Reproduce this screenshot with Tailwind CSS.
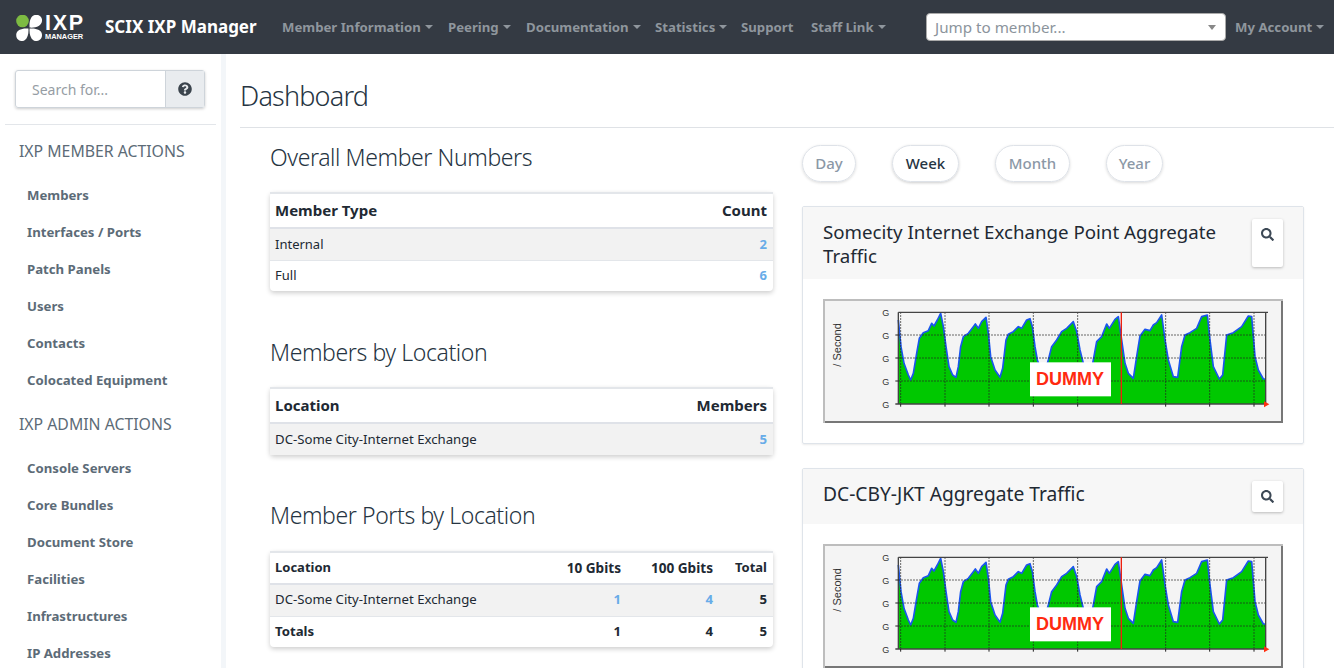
<!DOCTYPE html>
<html lang="en">
<head>
    <meta charset="UTF-8">
    <meta name="viewport" content="width=device-width, initial-scale=1.0">
    <title>SCIX IXP Manager</title>
    <script src="https://cdn.jsdelivr.net/npm/@tailwindcss/browser@4"></script>
</head>
<body class="bg-white font-['Noto_Sans',sans-serif] text-[#212933] overflow-hidden">

    <!-- shared graph -->
    <svg class="hidden">
      <symbol id="graph" viewBox="69 297 1380 372">
        <rect x="69" y="297" width="1380" height="372" fill="#bdbdbd"/>
        <rect x="75" y="303" width="1374" height="366" fill="#777"/>
        <rect x="75" y="303" width="1368" height="360" fill="#f4f4f4"/>
        <polygon fill="#00c800" points="295,612 295,360 303,440 312,490 325,525 332,540 340,520 350,460 358,415 370,398 385,392 395,370 402,378 412,360 422,340 430,380 438,440 447,500 458,525 468,532 475,500 482,440 490,410 505,400 520,380 526,372 535,385 545,365 558,352 565,400 572,470 585,510 600,532 608,505 618,420 625,403 640,395 655,380 665,385 680,360 690,356 697,380 705,440 712,480 730,530 745,480 755,440 770,420 785,395 800,385 820,365 830,395 840,450 850,490 870,530 880,480 890,425 905,410 920,372 928,385 945,358 955,350 965,420 975,490 985,520 1000,535 1010,470 1020,408 1035,388 1050,392 1060,375 1070,368 1085,345 1095,420 1105,480 1120,530 1133,532 1145,440 1155,405 1170,398 1190,385 1205,350 1222,345 1230,420 1240,500 1258,537 1268,525 1280,405 1300,398 1325,380 1345,348 1355,350 1365,470 1375,510 1390,537 1397,537 1397,612"/>
        <polyline fill="none" stroke="#1a55ee" stroke-width="5" stroke-linejoin="round" points="295,360 303,440 312,490 325,525 332,540 340,520 350,460 358,415 370,398 385,392 395,370 402,378 412,360 422,340 430,380 438,440 447,500 458,525 468,532 475,500 482,440 490,410 505,400 520,380 526,372 535,385 545,365 558,352 565,400 572,470 585,510 600,532 608,505 618,420 625,403 640,395 655,380 665,385 680,360 690,356 697,380 705,440 712,480 730,530 745,480 755,440 770,420 785,395 800,385 820,365 830,395 840,450 850,490 870,530 880,480 890,425 905,410 920,372 928,385 945,358 955,350 965,420 975,490 985,520 1000,535 1010,470 1020,408 1035,388 1050,392 1060,375 1070,368 1085,345 1095,420 1105,480 1120,530 1133,532 1145,440 1155,405 1170,398 1190,385 1205,350 1222,345 1230,420 1240,500 1258,537 1268,525 1280,405 1300,398 1325,380 1345,348 1355,350 1365,470 1375,510 1390,537 1397,537"/>
        <path d="M295 405H1400M295 474H1400M295 543H1400M302 337V612M435 337V612M567 337V612M700 337V612M833 337V612M1097 337V612M1229 337V612M1362 337V612" fill="none" stroke="#222" stroke-width="3" stroke-dasharray="4 5"/>
        <path d="M295 337H1404M295 337V612M1397 337V612M286 612H1397" stroke="#444" stroke-width="4" fill="none"/>
        <path d="M302 612v8M435 612v8M567 612v8M700 612v8M833 612v8M1097 612v8M1229 612v8M1362 612v8M286 405h10M286 474h10M286 543h10" stroke="#222" stroke-width="3"/>
        <path d="M964 337V612" stroke="#ee2010" stroke-width="4"/>
        <polygon points="1392,604 1408,613 1392,622" fill="#ff3010"/>
        <g font-family="'Liberation Sans',sans-serif" font-size="27" fill="#333">
          <text x="247" y="349">G</text><text x="247" y="417">G</text><text x="247" y="486">G</text><text x="247" y="555">G</text><text x="247" y="624">G</text>
          <text transform="translate(122 500) rotate(-90)" font-size="33">/ Second</text>
        </g>
        <rect x="690" y="487" width="243" height="102" fill="#fff"/>
        <text x="708" y="556" font-family="'Liberation Sans',sans-serif" font-weight="700" font-size="54" fill="#ff2a10">DUMMY</text>
      </symbol>
      <symbol id="icon-search" viewBox="0 0 512 512"><path fill="currentColor" d="M505 442.7L405.3 343c-4.5-4.5-10.6-7-17-7H372c27.6-35.3 44-79.7 44-128C416 93.1 322.9 0 208 0S0 93.1 0 208s93.1 208 208 208c48.3 0 92.7-16.4 128-44v16.3c0 6.4 2.5 12.5 7 17l99.7 99.7c9.4 9.4 24.6 9.4 33.9 0l28.3-28.3c9.4-9.4 9.4-24.6.1-34zM208 336c-70.7 0-128-57.2-128-128 0-70.7 57.2-128 128-128 70.7 0 128 57.2 128 128 0 70.7-57.2 128-128 128z"/></symbol>
    </svg>

    <!-- top nav -->
    <nav class="h-[54px] bg-[#343a43] flex items-center">
      <div class="w-[105px] pl-4 shrink-0 flex items-center">
        <svg class="block mt-[2px]" width="26" height="26" viewBox="0 2 26 26">
          <circle cx="6.5" cy="8" r="6.3" fill="#7dbb42"/>
          <path d="M13.6 14.6 C13 8 15 2 20 1.8 C24 1.6 26.4 4.6 26 8 C25.6 12.6 20 15.2 13.6 14.6Z" fill="#fff"/>
          <path d="M12.4 15.6 C6 15 0.2 17 0.2 22 C0.2 26 3 28 6.5 28 C10.5 28 13 22 12.4 15.6Z" fill="#fff"/>
          <path d="M13.6 15.6 C20 15 26 17 26 22 C26 26 23 28 19.5 28 C15.5 28 13 22 13.6 15.6Z" fill="#fff"/>
        </svg>
        <div class="ml-[3px] mt-[1px] text-white font-['Liberation_Sans',sans-serif] font-bold">
          <div class="text-[21.5px] leading-[18px] tracking-[1.7px]">IXP</div>
          <div class="mt-[1px] text-[7.4px] leading-[8px]">MANAGER</div>
        </div>
      </div>
      <a class="text-white font-bold text-[17px] w-[177px] shrink-0 whitespace-nowrap">SCIX IXP Manager</a>
      <div class="flex pt-[1px] text-[13.2px] font-bold text-[#8f969d] whitespace-nowrap">
        <a class="w-[166px] flex items-center">Member Information<span class="ml-1 border-x-4 border-t-4 border-x-transparent border-t-[#8f969d]"></span></a>
        <a class="w-[78px] flex items-center">Peering<span class="ml-1 border-x-4 border-t-4 border-x-transparent border-t-[#8f969d]"></span></a>
        <a class="w-[129px] flex items-center">Documentation<span class="ml-1 border-x-4 border-t-4 border-x-transparent border-t-[#8f969d]"></span></a>
        <a class="w-[86px] flex items-center">Statistics<span class="ml-1 border-x-4 border-t-4 border-x-transparent border-t-[#8f969d]"></span></a>
        <a class="w-[70px]">Support</a>
        <a class="w-[115px] flex items-center">Staff Link<span class="ml-1 border-x-4 border-t-4 border-x-transparent border-t-[#8f969d]"></span></a>
      </div>
      <div class="w-[300px] h-[28px] bg-white rounded border border-[#aaa] flex items-center justify-between pl-2 pr-[9px] text-[15.2px] text-[#8c949c] shrink-0">
        <span>Jump to member...</span>
        <span class="border-x-[4px] border-t-[5px] border-x-transparent border-t-[#888]"></span>
      </div>
      <a class="ml-[9px] pt-[1px] text-[13.2px] font-bold text-[#8f969d] flex items-center whitespace-nowrap">My Account<span class="ml-1 border-x-4 border-t-4 border-x-transparent border-t-[#8f969d]"></span></a>
    </nav>

    <div class="flex h-[614px] overflow-hidden">
      <!-- sidebar -->
      <aside class="w-[226px] shrink-0 border-r-[5px] border-[#f3f6f9] pt-4 px-[5px]">
        <div class="mx-[10px] flex h-[38px] w-[190px] rounded-[3px] border border-[#ced4da] shadow-[0_1px_3px_rgba(0,0,0,0.2)] text-[14px]">
          <div class="w-[150px] pl-4 flex items-center text-[#969da4] border-r border-[#ced4da]">Search for...</div>
          <div class="flex-1 bg-[#e9ecef] flex items-center justify-center">
            <svg width="14" height="14" viewBox="0 0 512 512"><path fill="#3b444d" d="M504 256c0 136.997-111.043 248-248 248S8 392.997 8 256C8 119.083 119.043 8 256 8s248 111.083 248 248zM262.655 90c-54.497 0-89.255 22.957-116.549 63.758-3.536 5.286-2.353 12.415 2.715 16.258l34.699 26.31c5.205 3.947 12.621 3.008 16.665-2.122 17.864-22.658 30.113-35.797 57.303-35.797 20.429 0 45.698 13.148 45.698 32.958 0 14.976-12.363 22.667-32.534 33.976C247.128 238.528 216 254.941 216 296v4c0 6.627 5.373 12 12 12h56c6.627 0 12-5.373 12-12v-1.333c0-28.462 83.186-29.647 83.186-106.667 0-58.002-60.165-102-116.531-102zM256 338c-25.365 0-46 20.635-46 46 0 25.364 20.635 46 46 46s46-20.636 46-46c0-25.365-20.635-46-46-46z"/></svg>
          </div>
        </div>
        <div class="mt-4 border-t border-[#e3e6ea] pt-[14px]">
          <h6 class="pl-[14px] h-[24px] leading-[24px] text-[15.8px] text-[#5c6b77] uppercase">IXP Member Actions</h6>
          <ul class="mt-[14px] pl-[22px] text-[13.2px] font-bold text-[#5c6b77] leading-[37px]">
            <li>Members</li><li>Interfaces / Ports</li><li>Patch Panels</li><li>Users</li><li>Contacts</li><li>Colocated Equipment</li>
          </ul>
          <h6 class="mt-[13px] pl-[14px] h-[24px] leading-[24px] text-[15.8px] text-[#5c6b77] uppercase">IXP Admin Actions</h6>
          <ul class="mt-[14px] pl-[22px] text-[13.2px] font-bold text-[#5c6b77] leading-[37px]">
            <li>Console Servers</li><li>Core Bundles</li><li>Document Store</li><li>Facilities</li><li>Infrastructures</li><li>IP Addresses</li>
          </ul>
        </div>
      </aside>

      <!-- main -->
      <main class="flex-1 min-w-0">
        <div class="ml-[14px] h-[74px] border-b border-[#dfe2e6] pt-[21px]">
          <h1 class="text-[27px] leading-[42px] font-light tracking-[-0.8px] text-[#263442]">Dashboard</h1>
        </div>
        <div class="flex pl-[44px]">
          <!-- left tables -->
          <section class="w-[503px] shrink-0">
            <h3 class="mt-[12px] h-[34px] leading-[34px] text-[23px] font-light tracking-[-0.4px] text-[#263442]">Overall Member Numbers</h3>
            <table class="mt-[18px] w-full border-t-2 border-[#e3e6ea] rounded shadow-[0_2px_5px_rgba(0,0,0,0.2)] text-[13px]">
              <thead class="text-[15px] font-bold"><tr class="h-[35px] border-b-2 border-[#dfe2e8]"><th class="pl-[5px] text-left">Member Type</th><th class="pr-[6px] text-right">Count</th></tr></thead>
              <tbody>
                <tr class="h-[32px] bg-[#f2f2f2] border-b border-[#e3e6ea]"><td class="pl-[5px]">Internal</td><td class="pr-[6px] text-right font-bold text-[#68ace8]">2</td></tr>
                <tr class="h-[31px]"><td class="pl-[5px]">Full</td><td class="pr-[6px] text-right font-bold text-[#68ace8]">6</td></tr>
              </tbody>
            </table>
            <h3 class="mt-[44px] h-[34px] leading-[34px] text-[23px] font-light tracking-[-0.4px] text-[#263442]">Members by Location</h3>
            <table class="mt-[18px] w-full border-t-2 border-[#e3e6ea] rounded shadow-[0_2px_5px_rgba(0,0,0,0.2)] text-[13.2px]">
              <thead class="text-[15px] font-bold"><tr class="h-[35px] border-b-2 border-[#dfe2e8]"><th class="pl-[5px] text-left">Location</th><th class="pr-[6px] text-right">Members</th></tr></thead>
              <tbody>
                <tr class="h-[32px] bg-[#f2f2f2]"><td class="pl-[5px]">DC-Some City-Internet Exchange</td><td class="pr-[6px] text-right font-bold text-[#68ace8]">5</td></tr>
              </tbody>
            </table>
            <h3 class="mt-[43px] h-[34px] leading-[34px] text-[23px] font-light tracking-[-0.4px] text-[#263442]">Member Ports by Location</h3>
            <table class="mt-[19px] w-full border-t-2 border-[#e3e6ea] rounded shadow-[0_2px_5px_rgba(0,0,0,0.2)] text-[13.2px]">
              <thead class="text-[13px] font-bold"><tr class="h-[32px] border-b-2 border-[#dfe2e8]"><th class="pl-[5px] text-left">Location</th><th class="w-[92px] text-[13.6px] text-right">10 Gbits</th><th class="w-[92px] text-[13.6px] text-right">100 Gbits</th><th class="w-[60px] pr-[6px] text-right">Total</th></tr></thead>
              <tbody>
                <tr class="h-[32px] bg-[#f2f2f2] border-b border-[#e3e6ea]"><td class="pl-[5px]">DC-Some City-Internet Exchange</td><td class="text-right font-bold text-[#68ace8]">1</td><td class="text-right font-bold text-[#68ace8]">4</td><td class="pr-[6px] text-right font-bold">5</td></tr>
                <tr class="h-[31px] font-bold"><td class="pl-[5px]">Totals</td><td class="text-right">1</td><td class="text-right">4</td><td class="pr-[6px] text-right">5</td></tr>
              </tbody>
            </table>
          </section>

          <!-- right graphs -->
          <section class="ml-[29px] w-[502px] shrink-0">
            <div class="mt-[17px] flex h-[37px] text-[15px] font-medium text-[#8b98a6]">
              <a class="w-[54px] mr-[36px] flex items-center justify-center rounded-full border border-[#dee2e8] shadow-[0_1px_3px_rgba(0,0,0,0.15)]">Day</a>
              <a class="w-[67px] mr-[36px] flex items-center justify-center rounded-full border border-[#dee2e8] shadow-[0_1px_3px_rgba(0,0,0,0.2)] text-[#263442]">Week</a>
              <a class="w-[75px] mr-[36px] flex items-center justify-center rounded-full border border-[#dee2e8] shadow-[0_1px_3px_rgba(0,0,0,0.15)]">Month</a>
              <a class="w-[57px] flex items-center justify-center rounded-full border border-[#dee2e8] shadow-[0_1px_3px_rgba(0,0,0,0.15)]">Year</a>
            </div>
            <div class="mt-6 border border-[#dfe4ea] rounded-[2px] shadow-[0_1px_2px_rgba(0,0,0,0.08)]">
              <div class="bg-[#f7f7f7] flex justify-between pl-5 pr-5 py-3">
                <h4 class="w-[410px] pt-[1px] h-[48px] text-[18.7px] leading-[24px]">Somecity Internet Exchange Point Aggregate Traffic</h4>
                <button class="w-[31px] bg-white rounded-[2px] shadow-[0_1px_3px_rgba(0,0,0,0.25)] flex justify-center pt-[9px] text-[#3c4855]"><svg width="13" height="13"><use href="#icon-search"/></svg></button>
              </div>
              <div class="px-5 py-5"><svg class="block" width="460" height="124"><use href="#graph"/></svg></div>
            </div>
            <div class="mt-6 border border-[#dfe4ea] rounded-[2px] shadow-[0_1px_2px_rgba(0,0,0,0.08)]">
              <div class="bg-[#f7f7f7] flex justify-between pl-5 pr-5 py-3">
                <h4 class="text-[19.2px] leading-[26px]">DC-CBY-JKT Aggregate Traffic</h4>
                <button class="w-[31px] h-[31px] bg-white rounded-[2px] shadow-[0_1px_3px_rgba(0,0,0,0.25)] flex justify-center items-center text-[#3c4855]"><svg width="13" height="13"><use href="#icon-search"/></svg></button>
              </div>
              <div class="px-5 py-5"><svg class="block" width="460" height="124"><use href="#graph"/></svg></div>
            </div>
          </section>
        </div>
      </main>
    </div>
</body>
</html>
